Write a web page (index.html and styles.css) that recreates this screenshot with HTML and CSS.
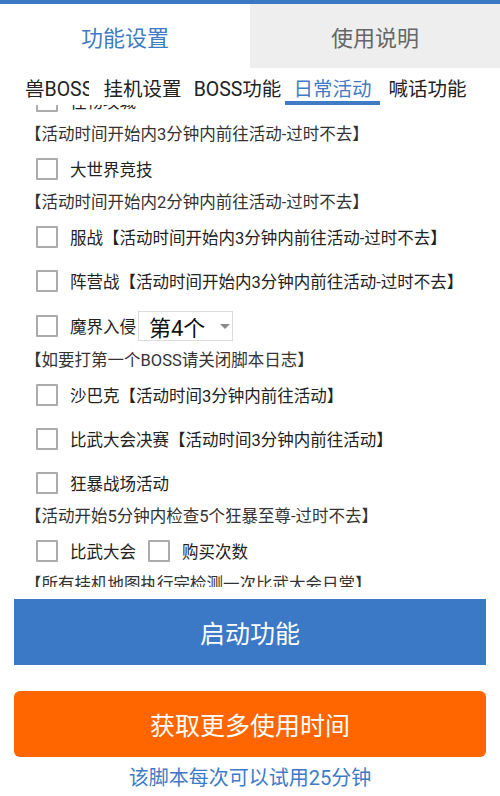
FILE: index.html
```html
<!DOCTYPE html>
<html lang="zh">
<head>
<meta charset="utf-8">
<title>功能设置</title>
<link rel="stylesheet" href="styles.css">
</head>
<body>
<div class="topbar"></div>
<div class="tabs">
  <div class="tab active">功能设置</div>
  <div class="tab">使用说明</div>
</div>
<div class="subtabs">
  <div class="subtab first"><span class="clip">兽BOSS</span></div>
  <div class="subtab">挂机设置</div>
  <div class="subtab">BOSS功能</div>
  <div class="subtab current">日常活动</div>
  <div class="subtab">喊话功能</div>
</div>
<div class="scroll">
  <div class="list">
    <div class="row"><span class="box"></span><span class="label">怪物攻城</span></div>
    <div class="note">【活动时间开始内3分钟内前往活动-过时不去】</div>
    <div class="row"><span class="box"></span><span class="label">大世界竞技</span></div>
    <div class="note">【活动时间开始内2分钟内前往活动-过时不去】</div>
    <div class="row"><span class="box"></span><span class="label">服战【活动时间开始内3分钟内前往活动-过时不去】</span></div>
    <div class="row"><span class="box"></span><span class="label">阵营战【活动时间开始内3分钟内前往活动-过时不去】</span></div>
    <div class="row tall"><span class="box"></span><span class="label">魔界入侵</span><span class="select"><span class="sel-text">第4个</span><span class="caret"></span></span></div>
    <div class="note">【如要打第一个BOSS请关闭脚本日志】</div>
    <div class="row"><span class="box"></span><span class="label">沙巴克【活动时间3分钟内前往活动】</span></div>
    <div class="row"><span class="box"></span><span class="label">比武大会决赛【活动时间3分钟内前往活动】</span></div>
    <div class="row"><span class="box"></span><span class="label">狂暴战场活动</span></div>
    <div class="note">【活动开始5分钟内检查5个狂暴至尊-过时不去】</div>
    <div class="row"><span class="box"></span><span class="label">比武大会</span><span class="box second"></span><span class="label">购买次数</span></div>
    <div class="note">【所有挂机地图执行完检测一次比武大会日常】</div>
  </div>
</div>
<div class="btn start">启动功能</div>
<div class="btn more">获取更多使用时间</div>
<p class="footer">该脚本每次可以试用25分钟</p>
</body>
</html>
```

FILE: styles.css
```css
* { box-sizing: border-box; }
html, body {
  margin: 0;
  padding: 0;
  background: #ffffff;
  font-family: Roboto, "Noto Sans CJK SC", sans-serif;
  color: #222;
}
.topbar {
  height: 4px;
  background: #3b78c4;
}
.tabs {
  display: flex;
  height: 64px;
}
.tab {
  flex: 1;
  display: flex;
  align-items: center;
  justify-content: center;
  font-size: 22px;
  color: #666;
  background: #eeeeee;
}
.tab.active {
  background: #ffffff;
  color: #3f7cc5;
}
.subtabs {
  display: flex;
  height: 37px;
  overflow: hidden;
}
.subtab {
  flex: 0 0 95px;
  display: flex;
  align-items: center;
  justify-content: center;
  padding-top: 5px;
  border-bottom: 4px solid transparent;
  font-size: 19.5px;
  color: #222;
  white-space: nowrap;
  overflow: hidden;
}
.subtab.first {
  justify-content: flex-start;
  padding-left: 25px;
}
.subtab .clip {
  display: block;
  width: 64px;
  overflow: hidden;
}
.subtab.current {
  color: #3f7cc5;
  border-bottom-color: #3f7cc5;
}
.scroll {
  height: 482px;
  overflow: hidden;
}
.list {
  margin-top: -26px;
}
.row {
  display: flex;
  align-items: center;
  height: 44px;
  padding-left: 36px;
  font-size: 16.5px;
}
.row.tall {
  height: 46px;
}
.box {
  flex: 0 0 22px;
  width: 22px;
  height: 22px;
  border: 2px solid #ababab;
  border-radius: 1px;
  margin-right: 12px;
}
.box.second {
  margin-left: 12px;
}
.label {
  white-space: nowrap;
  color: #222;
}
.note {
  height: 24px;
  line-height: 24px;
  padding-left: 25px;
  font-size: 16.5px;
  color: #333;
  white-space: nowrap;
}
.select {
  display: flex;
  align-items: center;
  width: 95px;
  height: 30px;
  margin-left: 2px;
  border: 1px solid #dcdcdc;
  padding-left: 10px;
  padding-right: 2px;
}
.sel-text {
  font-size: 22px;
  color: #111;
}
.caret {
  margin-left: auto;
  width: 0;
  height: 0;
  border-left: 5px solid transparent;
  border-right: 5px solid transparent;
  border-top: 5px solid #8a8a8a;
}
.btn {
  display: flex;
  align-items: center;
  justify-content: center;
  margin: 0 14px;
  height: 66px;
  color: #ffffff;
  font-size: 25px;
}
.btn.start {
  margin-top: 12px;
  background: #3b79c6;
}
.btn.more {
  margin-top: 26px;
  background: #ff6600;
  border-radius: 6px;
}
.footer {
  margin: 10px 0 0;
  text-align: center;
  font-size: 20px;
  line-height: 22px;
  color: #3d7bc6;
}
```
